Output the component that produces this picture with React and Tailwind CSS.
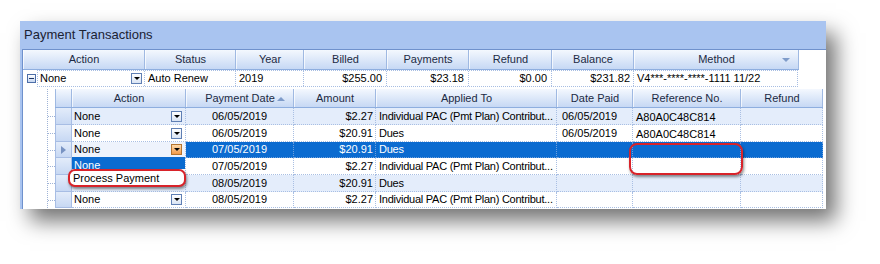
import React from 'react'

const outerCols = [
  { name: 'Action', w: 122 },
  { name: 'Status', w: 91 },
  { name: 'Year', w: 68 },
  { name: 'Billed', w: 83 },
  { name: 'Payments', w: 82 },
  { name: 'Refund', w: 83 },
  { name: 'Balance', w: 82 },
  { name: 'Method', w: 165, sort: 'down' },
]

const innerCols = [
  { name: 'Action', w: 114 },
  { name: 'Payment Date', w: 108, sort: 'up' },
  { name: 'Amount', w: 82 },
  { name: 'Applied To', w: 181 },
  { name: 'Date Paid', w: 76 },
  { name: 'Reference No.', w: 108 },
  { name: 'Refund', w: 82 },
]

const pac = 'Individual PAC (Pmt Plan) Contribut...'

const rows = [
  { h: 17, kind: 'light', date: '06/05/2019', amount: '$2.27', applied: pac, paid: '06/05/2019', ref: 'A80A0C48C814' },
  { h: 17, kind: 'white', date: '06/05/2019', amount: '$20.91', applied: 'Dues', paid: '06/05/2019', ref: 'A80A0C48C814' },
  { h: 16, kind: 'selected', date: '07/05/2019', amount: '$20.91', applied: 'Dues', paid: '', ref: '' },
  { h: 17, kind: 'white', date: '07/05/2019', amount: '$2.27', applied: pac, paid: '', ref: '', hidden: true },
  { h: 17, kind: 'light', date: '08/05/2019', amount: '$20.91', applied: 'Dues', paid: '', ref: '', hidden: true },
  { h: 16, kind: 'white', date: '08/05/2019', amount: '$2.27', applied: pac, paid: '', ref: '' },
]

const DropButton = ({ hot }) => (
  <span
    className={`w-[11px] h-[11px] flex items-center justify-center border ${
      hot
        ? 'border-[#b5742f] bg-linear-to-b from-[#fcd9a8] to-[#f39a45]'
        : 'border-[#5f7fb4] bg-linear-to-b from-white to-[#d9e4f4]'
    }`}
  >
    <span className="w-0 h-0 border-l-[3px] border-r-[3px] border-t-[3px] border-l-transparent border-r-transparent border-t-black" />
  </span>
)

const SortArrow = ({ dir }) => (
  <span
    className={`absolute right-[8px] top-[8px] w-0 h-0 border-l-[4px] border-r-[4px] border-l-transparent border-r-transparent ${
      dir === 'up' ? 'border-b-[4px] border-b-[#7f9cca]' : 'border-t-[4px] border-t-[#7f9cca]'
    }`}
  />
)

const HeaderCell = ({ col, h }) => (
  <div
    style={{ width: col.w }}
    className={`relative shrink-0 ${h} flex items-center justify-center border-r border-[#9fb9e2] border-l border-l-white/70 text-[#1c2a44]`}
  >
    {col.name}
    {col.sort && <SortArrow dir={col.sort} />}
  </div>
)

export default function App() {
  return (
    <div className="w-[880px] h-[264px] bg-white overflow-hidden pl-[20px] pt-[21px] font-['Liberation_Sans',Arial,sans-serif] text-[11px] text-black">
      <div className="relative w-[806px] h-[188px] bg-[#a9c4f0] shadow-[10px_12px_20px_rgba(0,0,0,0.55)] flex flex-col">
        {/* title */}
        <div className="h-[28px] shrink-0 flex items-center pl-[4px] text-[13px] text-[#1b2233]">
          Payment Transactions
        </div>

        {/* grid area */}
        <div className="flex-1 ml-[2px] bg-white border-t border-l border-[#6f91cc] overflow-hidden flex flex-col">
          {/* outer header */}
          <div className="flex h-[20px] shrink-0">
            <div className="flex bg-linear-to-b from-[#f4f8fe] to-[#c6d8f4] border-b border-[#8eaedf]">
              {outerCols.map((c) => (
                <HeaderCell key={c.name} col={c} h="h-[19px]" />
              ))}
            </div>
          </div>

          {/* outer row */}
          <div className="flex h-[17px] shrink-0">
            <div className="w-[14px] shrink-0 flex items-center justify-center pl-[2px]">
              <span className="w-[9px] h-[9px] border border-[#4d6ea8] bg-linear-to-b from-white to-[#c5d6f0] flex items-center justify-center">
                <span className="w-[5px] h-px bg-[#1d3666]" />
              </span>
            </div>
            <div className="flex border border-dotted border-[#a7bde2]">
              <div className="w-[107px] shrink-0 flex items-center justify-between pl-[2px] pr-[2px] border-r border-dotted border-[#a7bde2]">
                <span>None</span>
                <DropButton />
              </div>
              <div className="w-[91px] shrink-0 flex items-center pl-[3px] border-r border-dotted border-[#a7bde2]">Auto Renew</div>
              <div className="w-[68px] shrink-0 flex items-center pl-[3px] border-r border-dotted border-[#a7bde2]">2019</div>
              <div className="w-[83px] shrink-0 flex items-center justify-end pr-[4px] border-r border-dotted border-[#a7bde2]">$255.00</div>
              <div className="w-[82px] shrink-0 flex items-center justify-end pr-[4px] border-r border-dotted border-[#a7bde2]">$23.18</div>
              <div className="w-[83px] shrink-0 flex items-center justify-end pr-[4px] border-r border-dotted border-[#a7bde2]">$0.00</div>
              <div className="w-[82px] shrink-0 flex items-center justify-end pr-[3px] border-r border-dotted border-[#a7bde2]">$231.82</div>
              <div className="w-[163px] shrink-0 flex items-center pl-[3px]">V4***-****-****-1111 11/22</div>
            </div>
          </div>

          {/* inner grid */}
          <div className="flex mt-[2px]">
            {/* tree gutter */}
            <div className="w-[32px] shrink-0 pl-[24px]">
              <div className="h-full border-l border-dotted border-[#9fb3d6] flex flex-col">
                <div className="h-[19px] shrink-0" />
                {rows.map((r, i) => (
                  <div key={i} style={{ height: r.h }} className="shrink-0 flex items-center">
                    <span className="w-[8px] border-t border-dotted border-[#9fb3d6]" />
                  </div>
                ))}
              </div>
            </div>

            <div className="flex flex-col">
              {/* inner header */}
              <div className="flex h-[19px] shrink-0 bg-linear-to-b from-[#f4f8fe] to-[#c6d8f4] border-b border-[#8eaedf]">
                <div className="w-[17px] shrink-0 border-r border-l border-[#9fb9e2]" />
                {innerCols.map((c) => (
                  <HeaderCell key={c.name + c.w} col={c} h="h-[18px]" />
                ))}
              </div>

              {rows.map((r, i) => {
                const sel = r.kind === 'selected'
                const bg = sel ? 'bg-[#0b6bd0] text-white' : r.kind === 'light' ? 'bg-[#e4edfb]' : 'bg-white'
                const line = sel ? 'border-[#6d9fdc]' : 'border-[#a9bfe3]'
                return (
                  <div key={i} style={{ height: r.h }} className={`flex shrink-0 ${bg}`}>
                    <div className="w-[17px] shrink-0 bg-linear-to-b from-[#e3ecfa] to-[#c7d8f3] border-l border-r border-b border-[#a7bde4] flex items-center justify-center">
                      {sel && (
                        <span className="w-0 h-0 border-t-[4px] border-b-[4px] border-l-[5px] border-t-transparent border-b-transparent border-l-[#7893c2]" />
                      )}
                    </div>
                    <div
                      className={`w-[114px] shrink-0 flex items-center justify-between pl-[2px] pr-[3px] border-r border-b border-dotted border-[#a9bfe3] ${
                        sel ? 'bg-[#eef3fc] text-black' : ''
                      }`}
                    >
                      {!r.hidden && (
                        <>
                          <span>None</span>
                          <DropButton hot={sel} />
                        </>
                      )}
                    </div>
                    <div className={`w-[108px] shrink-0 flex items-center justify-center border-r border-b border-dotted ${line}`}>{r.date}</div>
                    <div className={`w-[82px] shrink-0 flex items-center justify-end pr-[2px] border-r border-b border-dotted ${line}`}>{r.amount}</div>
                    <div className={`w-[181px] shrink-0 flex items-center pl-[3px] whitespace-nowrap tracking-[-0.25px] border-r border-b border-dotted ${line}`}>{r.applied}</div>
                    <div className={`w-[76px] shrink-0 flex items-center pl-[5px] border-r border-b border-dotted ${line}`}>{r.paid}</div>
                    <div className={`w-[108px] shrink-0 flex items-start pt-[1px] pl-[3px] border-r border-b border-dotted ${line}`}>{r.ref}</div>
                    <div className={`w-[82px] shrink-0 border-r border-b border-dotted ${line}`} />
                  </div>
                )
              })}
            </div>
          </div>
        </div>

        {/* open dropdown list */}
        <div className="absolute left-[52px] top-[136px] w-[113px] flex flex-col bg-white">
          <div className="h-[12px] bg-[#0b6bd0] text-white pl-[2px] leading-[16px] overflow-hidden">None</div>
          <div className="h-[17px] bg-white" />
        </div>

        {/* callouts */}
        <div className="absolute left-[48px] top-[148px] w-[118px] h-[18px] rounded-[7px] border-2 border-[#d8232a] bg-white shadow-[1px_2px_3px_rgba(0,0,0,0.45)] flex items-center pl-[3px]">
          Process Payment
        </div>
        <div className="absolute left-[609px] top-[122px] w-[114px] h-[32px] rounded-[8px] border-2 border-[#d8232a] shadow-[1px_2px_3px_rgba(0,0,0,0.45)]" />
      </div>
    </div>
  )
}
